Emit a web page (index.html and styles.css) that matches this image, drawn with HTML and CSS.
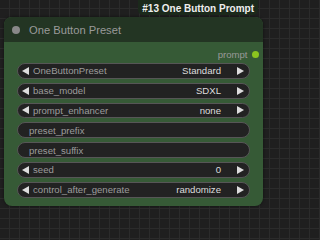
FILE: index.html
```html
<!DOCTYPE html>
<html>
<head>
<meta charset="utf-8">
<link rel="stylesheet" href="styles.css">
</head>
<body>
<div class="badge-row"><div class="badge">#13 One Button Prompt</div></div>
<div class="node">
  <div class="title"><span class="dot"></span><span class="title-text">One Button Preset</span></div>
  <div class="node-body">
    <div class="output"><span class="out-label">prompt</span><span class="out-dot"></span></div>
    <div class="widgets">
      <div class="widget combo"><span class="arrow left"></span><span class="label">OneButtonPreset</span><span class="value">Standard</span><span class="arrow right"></span></div>
      <div class="widget combo"><span class="arrow left"></span><span class="label">base_model</span><span class="value">SDXL</span><span class="arrow right"></span></div>
      <div class="widget combo"><span class="arrow left"></span><span class="label">prompt_enhancer</span><span class="value">none</span><span class="arrow right"></span></div>
      <div class="widget text"><span class="label">preset_prefix</span></div>
      <div class="widget text"><span class="label">preset_suffix</span></div>
      <div class="widget combo"><span class="arrow left"></span><span class="label">seed</span><span class="value">0</span><span class="arrow right"></span></div>
      <div class="widget combo"><span class="arrow left"></span><span class="label">control_after_generate</span><span class="value">randomize</span><span class="arrow right"></span></div>
    </div>
  </div>
</div>
</body>
</html>
```

FILE: styles.css
```css
html, body {
  margin: 0;
  padding: 0;
}

body {
  width: 268px;
  height: 215px;
  overflow: hidden;
  background-color: #1f1f1f;
  background-image:
    linear-gradient(to right, #2b2b2b 1px, transparent 1px),
    linear-gradient(to bottom, #2b2b2b 1px, transparent 1px);
  background-size: 10px 10px;
  background-position: 9px 8px;
  font-family: "Liberation Sans", Arial, sans-serif;
}

.badge-row {
  display: flex;
  justify-content: flex-end;
  padding-right: 10px;
  height: 15px;
}

.badge {
  box-sizing: border-box;
  height: 15px;
  padding: 2px 4px 0;
  line-height: 13px;
  font-size: 10px;
  font-weight: bold;
  color: #eeeeee;
  background: #1b291b;
  border-radius: 0 0 5px 5px;
  white-space: nowrap;
}

.node {
  margin: 2px 0 0 4px;
  width: 259px;
  height: 189px;
  border-radius: 8px;
  background: #365a36;
  overflow: hidden;
  box-shadow: 0 0 3px rgba(0, 0, 0, 0.5);
}

.title {
  height: 25px;
  background: #233523;
  display: flex;
  align-items: center;
  padding-left: 8px;
}

.dot {
  width: 8px;
  height: 8px;
  border-radius: 50%;
  background: #888888;
}

.title-text {
  margin-left: 9px;
  color: #9a9a9a;
  font-size: 11.2px;
}

.node-body {
  padding-top: 4px;
}

.output {
  height: 16px;
  display: flex;
  justify-content: flex-end;
  align-items: center;
  padding-right: 4.5px;
}

.out-label {
  color: #999999;
  font-size: 9.6px;
  margin-right: 4px;
}

.out-dot {
  width: 7px;
  height: 7px;
  border-radius: 50%;
  background: #8cc51f;
}

.widgets {
  display: flex;
  flex-direction: column;
  gap: 4px;
  margin: 1px 13px 0;
}

.widget {
  box-sizing: border-box;
  height: 15.8px;
  border: 1px solid #565656;
  border-radius: 8px;
  background: #222222;
  display: flex;
  align-items: center;
  font-size: 9.6px;
  white-space: nowrap;
}

.combo {
  padding: 0 5px 0 4px;
}

.text {
  padding-left: 11px;
}

.label {
  color: #9c9c9c;
}

.combo .label {
  margin-left: 4px;
}

.value {
  margin-left: auto;
  margin-right: 16px;
  color: #dddddd;
}

.arrow {
  width: 0;
  height: 0;
  border-top: 4px solid transparent;
  border-bottom: 4px solid transparent;
}

.arrow.left {
  border-right: 7px solid #dddddd;
}

.arrow.right {
  border-left: 7px solid #dddddd;
}
```
